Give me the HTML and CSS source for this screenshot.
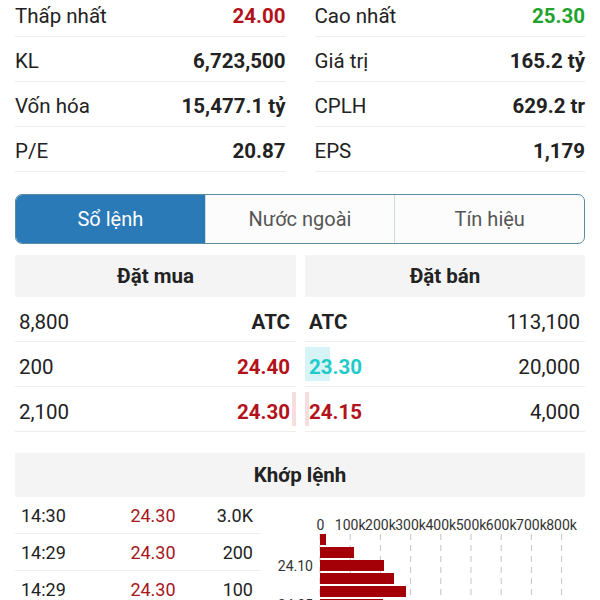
FILE: index.html
```html
<!DOCTYPE html>
<html lang="vi">
<head>
    <meta charset="UTF-8">
    <meta name="viewport" content="width=device-width, initial-scale=1.0">
    <title>Chi tiết mã</title>
    <link rel="stylesheet" href="styles.css">
</head>
<body>
    <div class="stats">
        <div class="stat"><span>Thấp nhất</span><span class="value down">24.00</span></div>
        <div class="stat"><span>Cao nhất</span><span class="value up">25.30</span></div>
        <div class="stat"><span>KL</span><span class="value">6,723,500</span></div>
        <div class="stat"><span>Giá trị</span><span class="value">165.2 tỷ</span></div>
        <div class="stat"><span>Vốn hóa</span><span class="value">15,477.1 tỷ</span></div>
        <div class="stat"><span>CPLH</span><span class="value">629.2 tr</span></div>
        <div class="stat"><span>P/E</span><span class="value">20.87</span></div>
        <div class="stat"><span>EPS</span><span class="value">1,179</span></div>
    </div>

    <div class="tabs">
        <div class="tab active">Sổ lệnh</div>
        <div class="tab">Nước ngoài</div>
        <div class="tab">Tín hiệu</div>
    </div>

    <div class="book">
        <div class="side buy">
            <div class="side-head">Đặt mua</div>
            <div class="book-row"><span>8,800</span><span class="price">ATC</span></div>
            <div class="book-row"><span>200</span><span class="price down">24.40</span></div>
            <div class="book-row"><span class="bar pink" style="width: 4px"></span><span>2,100</span><span class="price down">24.30</span></div>
        </div>
        <div class="side sell">
            <div class="side-head">Đặt bán</div>
            <div class="book-row"><span class="price">ATC</span><span>113,100</span></div>
            <div class="book-row"><span class="bar cyan" style="width: 25px"></span><span class="price floor">23.30</span><span>20,000</span></div>
            <div class="book-row"><span class="bar pink" style="width: 4px"></span><span class="price down">24.15</span><span>4,000</span></div>
        </div>
    </div>

    <div class="match-head">Khớp lệnh</div>
    <div class="match">
        <div class="trades">
            <div class="trade"><span>14:30</span><span class="trade-price">24.30</span><span class="trade-vol">3.0K</span></div>
            <div class="trade"><span>14:29</span><span class="trade-price">24.30</span><span class="trade-vol">200</span></div>
            <div class="trade"><span>14:29</span><span class="trade-price">24.30</span><span class="trade-vol">100</span></div>
        </div>
        <svg class="chart" width="325" height="130" viewBox="0 0 325 130">
            <g class="grid">
                <line x1="60" y1="37" x2="60" y2="130"/>
                <line x1="90.2" y1="37" x2="90.2" y2="130"/>
                <line x1="120.4" y1="37" x2="120.4" y2="130"/>
                <line x1="150.6" y1="37" x2="150.6" y2="130"/>
                <line x1="180.8" y1="37" x2="180.8" y2="130"/>
                <line x1="211" y1="37" x2="211" y2="130"/>
                <line x1="241.2" y1="37" x2="241.2" y2="130"/>
                <line x1="271.4" y1="37" x2="271.4" y2="130"/>
                <line x1="301.6" y1="37" x2="301.6" y2="130"/>
            </g>
            <g class="axis">
                <text x="60.5" y="33">0</text>
                <text x="90.2" y="33">100k</text>
                <text x="120.4" y="33">200k</text>
                <text x="150.6" y="33">300k</text>
                <text x="180.8" y="33">400k</text>
                <text x="211" y="33">500k</text>
                <text x="241.2" y="33">600k</text>
                <text x="271.4" y="33">700k</text>
                <text x="301.6" y="33">800k</text>
            </g>
            <g class="bars">
                <rect x="60" y="37" width="6" height="11"/>
                <rect x="60" y="50" width="34" height="11"/>
                <rect x="60" y="63" width="64" height="11"/>
                <rect x="60" y="76" width="74" height="11"/>
                <rect x="60" y="89" width="86" height="11"/>
                <rect x="60" y="102" width="63" height="11"/>
            </g>
            <g class="ylabels">
                <text x="53" y="74">24.10</text>
                <text x="53" y="113">24.25</text>
            </g>
        </svg>
    </div>
</body>
</html>
```

FILE: styles.css
```css
html, body {
    overflow: hidden;
}
body {
    margin: 0;
    padding: 0;
    background: #ffffff;
    font-family: 'Roboto', 'Noto Sans', sans-serif;
    color: #222;
    font-size: 20.5px;
}
.stats {
    display: grid;
    grid-template-columns: 1fr 1fr;
    column-gap: 29px;
    padding: 0 15px;
    margin-top: -8px;
}
.stat {
    display: flex;
    justify-content: space-between;
    align-items: center;
    height: 45px;
    box-sizing: border-box;
    padding-top: 4px;
    border-bottom: 1px solid #ededed;
}
.value {
    font-weight: bold;
    color: #222;
}
.down {
    color: #b2121a;
}
.up {
    color: #21a22b;
}
.floor {
    color: #1fcbc8;
}
.tabs {
    display: flex;
    margin: 22px 15px 0;
    height: 50px;
    box-sizing: border-box;
    border: 1.5px solid #5a8ba0;
    border-radius: 7px;
    overflow: hidden;
    background: #fcfcfc;
    font-size: 20px;
}
.tab {
    flex: 1;
    display: flex;
    align-items: center;
    justify-content: center;
    color: #555;
    border-left: 1px solid #cfd8dc;
}
.tab:first-child {
    border-left: none;
}
.tab.active {
    background: #2b7ab8;
    color: #ffffff;
}
.book {
    display: grid;
    grid-template-columns: 281px 280px;
    column-gap: 9px;
    margin: 11px 15px 0;
}
.side-head {
    height: 42px;
    display: flex;
    align-items: center;
    justify-content: center;
    background: #f4f4f4;
    font-weight: bold;
}
.book-row {
    position: relative;
    display: flex;
    justify-content: space-between;
    align-items: center;
    height: 45px;
    box-sizing: border-box;
    padding-top: 5px;
    border-bottom: 1px solid #ededed;
}
.buy .book-row {
    padding-left: 4px;
    padding-right: 6px;
}
.sell .book-row {
    padding-left: 4px;
    padding-right: 5px;
}
.book-row span {
    position: relative;
}
.book-row .bar {
    position: absolute;
    top: 5px;
    bottom: 5px;
}
.buy .bar {
    right: 0;
}
.sell .bar {
    left: 0;
}
.bar.pink {
    background: #f6dede;
}
.bar.cyan {
    background: #d6f4f6;
}
.price {
    font-weight: bold;
}
.match-head {
    margin: 21px 15px 0;
    height: 44px;
    display: flex;
    align-items: center;
    justify-content: center;
    background: #f4f4f4;
    font-weight: bold;
}
.match {
    display: flex;
    margin-left: 15px;
}
.trades {
    width: 245px;
    font-size: 18px;
}
.trade {
    display: grid;
    grid-template-columns: 100px 64px 1fr;
    align-items: center;
    height: 37px;
    box-sizing: border-box;
    padding: 0 7px 0 6px;
    border-bottom: 1px solid #ededed;
}
.trade-price {
    text-align: center;
    color: #a6161c;
}
.trade-vol {
    text-align: right;
}
.chart {
    display: block;
    flex: none;
}
.grid line {
    stroke: #c4c4c4;
    stroke-width: 1;
    stroke-dasharray: 6 5;
}
.axis text {
    font-size: 14px;
    fill: #333;
    text-anchor: middle;
}
.bars rect {
    fill: #a30008;
}
.ylabels text {
    font-size: 14px;
    fill: #333;
    text-anchor: end;
}
```
